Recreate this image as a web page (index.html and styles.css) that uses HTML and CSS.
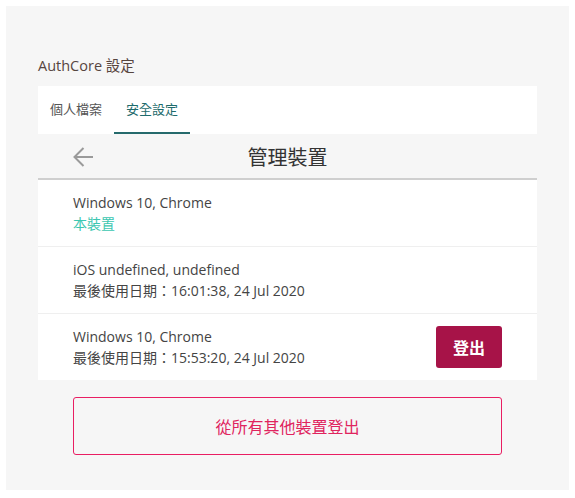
FILE: index.html
```html
<!DOCTYPE html>
<html lang="zh-Hant">
<head>
<meta charset="utf-8">
<link rel="stylesheet" href="styles.css">
</head>
<body>
<div class="page">
  <div class="title">AuthCore 設定</div>
  <div class="tabs">
    <div class="tab">個人檔案</div>
    <div class="tab active">安全設定</div>
  </div>
  <div class="header">
    <svg class="back" width="20" height="20" viewBox="0 0 20 20"><path d="M20 10H1.5M10.5 1L1.5 10l9 9" fill="none" stroke="#9a9a9a" stroke-width="2"/></svg>
    <div class="header-title">管理裝置</div>
  </div>
  <div class="list">
    <div class="row">
      <div class="info">
        <div class="line">Windows 10, Chrome</div>
        <div class="line current">本裝置</div>
      </div>
    </div>
    <div class="row">
      <div class="info">
        <div class="line">iOS undefined, undefined</div>
        <div class="line">最後使用日期：16:01:38, 24 Jul 2020</div>
      </div>
    </div>
    <div class="row">
      <div class="info">
        <div class="line">Windows 10, Chrome</div>
        <div class="line">最後使用日期：15:53:20, 24 Jul 2020</div>
      </div>
      <button class="logout">登出</button>
    </div>
  </div>
  <button class="logout-all">從所有其他裝置登出</button>
</div>
</body>
</html>
```
FILE: styles.css
```css
html, body {
  margin: 0;
  padding: 0;
  background: #ffffff;
}
body {
  font-family: "Open Sans", "Noto Sans CJK TC", sans-serif;
  color: #444;
}
.page {
  margin: 6px;
  width: 563px;
  height: 484px;
  box-sizing: border-box;
  background: #f6f6f6;
  padding: 48px 32px 0 32px;
}
.title {
  font-size: 14.5px;
  color: #56453f;
  line-height: 24px;
  height: 32px;
}
.tabs {
  display: flex;
  background: #fff;
  height: 48px;
}
.tab {
  width: 76px;
  box-sizing: border-box;
  text-align: center;
  font-size: 13px;
  line-height: 46px;
  color: #555;
  border-bottom: 2px solid transparent;
}
.tab.active {
  color: #1e6b6c;
  border-bottom-color: #256a6c;
}
.header {
  position: relative;
  height: 44px;
  border-bottom: 2px solid #cfcfcf;
  display: flex;
  align-items: center;
  justify-content: center;
}
.back {
  position: absolute;
  left: 35px;
  top: 13px;
}
.header-title {
  font-size: 20px;
  color: #333;
}
.list {
  background: #fff;
}
.row {
  display: flex;
  align-items: center;
  justify-content: space-between;
  height: 66px;
  padding: 0 35px;
  border-top: 1px solid #efefef;
}
.row:first-child {
  border-top: none;
}
.line {
  font-size: 14px;
  line-height: 21px;
  color: #444;
}
.line.current {
  color: #3cc7b1;
}
.logout {
  width: 66px;
  height: 42px;
  border: none;
  border-radius: 3px;
  background: #a71348;
  color: #fff;
  font-family: "Noto Sans CJK TC", sans-serif;
  font-weight: 700;
  font-size: 16px;
  padding: 0;
}
.logout-all {
  display: block;
  margin: 17px 0 0 35px;
  width: 429px;
  height: 58px;
  border: 1.5px solid #e91e63;
  border-radius: 3px;
  background: transparent;
  color: #e0245e;
  font-family: "Noto Sans CJK TC", sans-serif;
  font-size: 16px;
  padding: 0;
}
```
